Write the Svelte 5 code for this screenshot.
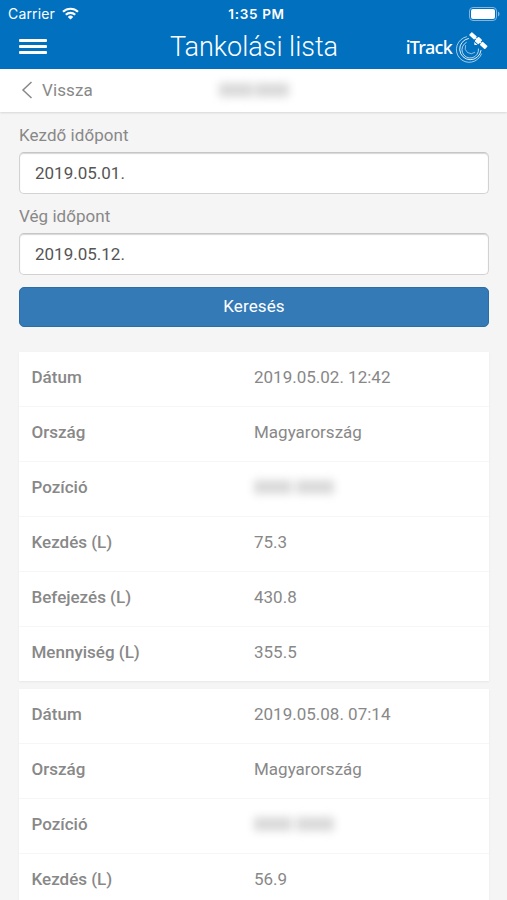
<script>
	let from = "2019.05.01.";
	let to = "2019.05.12.";

	const entries = [
		{
			date: "2019.05.02. 12:42",
			country: "Magyarország",
			start: "75.3",
			end: "430.8",
			amount: "355.5"
		},
		{
			date: "2019.05.08. 07:14",
			country: "Magyarország",
			start: "56.9"
		}
	];

	const rows = [
		["Dátum", "date"],
		["Ország", "country"],
		["Pozíció", "position"],
		["Kezdés (L)", "start"],
		["Befejezés (L)", "end"],
		["Mennyiség (L)", "amount"]
	];

	const visibleRows = (entry) => rows.filter(([, key]) => key === "position" || entry[key]);
</script>

<div class="screen">
	<header>
		<div class="status">
			<div class="carrier">
				<span>Carrier</span>
				<svg width="17" height="13" viewBox="0 0 17 13" fill="none" stroke="#fff" stroke-width="2.2">
					<path d="M1 4.8a10.8 10.8 0 0 1 15 0" />
					<path d="M3.8 7.8a6.7 6.7 0 0 1 9.4 0" />
					<path d="M8.5 12.4 5.8 9.9a3.9 3.9 0 0 1 5.4 0z" fill="#fff" stroke="none" />
				</svg>
			</div>
			<span class="clock">1:35 PM</span>
			<svg class="battery" width="32" height="14" viewBox="0 0 32 14">
				<rect x=".5" y=".5" width="27" height="13" rx="3.5" fill="none" stroke="#7fb7e0" />
				<rect x="2" y="2" width="24" height="10" rx="2" fill="#fff" />
				<path d="M29 4.5c2 .7 2 4.3 0 5z" fill="#7fb7e0" />
			</svg>
		</div>
		<div class="bar">
			<button class="menu" aria-label="Menü"><i></i><i></i><i></i></button>
			<h1>Tankolási lista</h1>
			<div class="logo">
				<span>iTrack</span>
				<svg width="34" height="34" viewBox="0 0 34 34" fill="none" stroke="#fff" stroke-linecap="round">
					<path d="M11.5 6.7A13 13 0 1 0 26.5 24" stroke-width=".8" opacity=".8" />
					<path d="M13.5 8.5A10.7 10.7 0 1 0 26 20.5" stroke-width="1" opacity=".9" />
					<path d="M11.3 12.4A8.3 8.3 0 1 0 23.5 19" stroke-width=".9" opacity=".8" />
					<path d="M10.5 15.5A6 6 0 0 0 19.8 22.4" stroke-width=".8" opacity=".7" />
					<g fill="#fff" stroke="none" transform="rotate(42 23.5 10.5)">
						<rect x="12.8" y="8.6" width="7" height="4.2" rx=".7" />
						<rect x="20.9" y="7.6" width="5.2" height="6" rx="1" />
						<rect x="27.2" y="8.6" width="7" height="4.2" rx=".7" />
						<path d="M19 10.2h9v1h-9zM21.2 14.5h4.6l-2.3 2z" />
					</g>
				</svg>
			</div>
		</div>
	</header>

	<nav>
		<button class="back">
			<svg width="12" height="18" viewBox="0 0 12 18" fill="none" stroke="#888" stroke-width="1.5">
				<path d="M10.5 1 2 9l8.5 8" />
			</svg>
			<span>Vissza</span>
		</button>
		<div class="hidden-text plate"><b></b><b></b></div>
	</nav>

	<main>
		<form>
			<label for="from">Kezdő időpont</label>
			<input id="from" type="text" bind:value={from} />
			<label for="to">Vég időpont</label>
			<input id="to" type="text" bind:value={to} />
			<button type="button" class="search">Keresés</button>
		</form>

		{#each entries as entry}
			<section class="card">
				{#each visibleRows(entry) as [label, key]}
					<div class="row">
						<span class="label">{label}</span>
						{#if key === "position"}
							<div class="hidden-text"><b></b><b></b></div>
						{:else}
							<span>{entry[key]}</span>
						{/if}
					</div>
				{/each}
			</section>
		{/each}
	</main>
</div>

<style>
	:global(body) {
		margin: 0;
		background: #f5f5f5;
	}

	.screen {
		height: 900px;
		overflow: hidden;
		background: #f5f5f5;
		color: #888;
		font-family: Roboto, sans-serif;
		font-size: 17px;
	}

	button {
		padding: 0;
		border: 0;
		background: none;
		color: inherit;
		font: inherit;
	}

	header {
		height: 69px;
		background: #0070bf;
		color: #fff;
	}

	.status {
		display: grid;
		grid-template-columns: 1fr auto 1fr;
		align-items: center;
		height: 27px;
		padding: 0 6px 0 8px;
		font-family: Inter, sans-serif;
		font-size: 14px;
	}

	.carrier {
		display: flex;
		align-items: center;
		gap: 7px;
		letter-spacing: .15px;
	}

	.clock {
		padding-left: 4px;
		font-size: 13.5px;
		font-weight: 600;
		letter-spacing: .7px;
	}

	.battery {
		justify-self: end;
	}

	.bar {
		display: grid;
		grid-template-columns: 1fr auto 1fr;
		align-items: center;
		height: 39px;
		padding: 0 18px 0 19px;
	}

	.menu {
		display: flex;
		flex-direction: column;
		gap: 3px;
		width: 28px;
	}

	.menu i {
		height: 3px;
		border-radius: 1px;
		background: #fff;
	}

	h1 {
		margin: 0;
		font-size: 27px;
		font-weight: 300;
		line-height: 38px;
	}

	.logo {
		display: flex;
		justify-content: flex-end;
		align-items: center;
		gap: 3px;
		font-family: "Noto Sans", sans-serif;
		font-size: 18px;
		font-weight: 500;
		letter-spacing: -.7px;
	}

	nav {
		display: grid;
		grid-template-columns: 1fr auto 1fr;
		align-items: center;
		height: 43px;
		padding: 0 20px 2px 21px;
		box-sizing: border-box;
		background: #fff;
		box-shadow: 0 1px 2px rgba(0, 0, 0, .12);
	}

	.back {
		display: flex;
		align-items: center;
		gap: 9px;
		letter-spacing: .1px;
	}

	.hidden-text {
		display: flex;
		gap: 4px;
		filter: blur(4.5px);
	}

	.hidden-text b {
		width: 38px;
		height: 14px;
		background: #dadada;
	}

	.plate {
		gap: 2px;
	}

	.plate b {
		width: 34px;
	}

	main {
		padding: 13px 18px 0 19px;
	}

	form {
		display: flex;
		flex-direction: column;
		margin-bottom: 25px;
	}

	label {
		height: 20px;
		margin-bottom: 7px;
		line-height: 20px;
		letter-spacing: .05px;
	}

	input {
		height: 42px;
		margin: 0 0 12px;
		padding: 0 15px 1px;
		box-sizing: border-box;
		border: 1px solid #d2d2d2;
		border-top-color: #c6c6c6;
		border-radius: 5px;
		background: #fff;
		box-shadow: inset 0 1px 1px rgba(0, 0, 0, .16);
		color: #555;
		font: inherit;
	}

	.search {
		height: 40px;
		padding-bottom: 2px;
		box-sizing: border-box;
		border: 1px solid #2e6da4;
		border-radius: 5px;
		background: #337ab7;
		color: #fff;
		letter-spacing: .1px;
	}

	.card {
		margin-bottom: 8px;
		background: #fff;
		box-shadow: 0 1px 2px rgba(0, 0, 0, .06);
	}

	.row {
		display: grid;
		grid-template-columns: 222px 1fr;
		align-items: center;
		height: 55px;
		padding: 0 13px 4px;
		box-sizing: border-box;
		border-bottom: 1px solid #f6f6f6;
	}

	.row:last-child {
		height: 54px;
		border-bottom: 0;
	}

	.label {
		margin-left: -.5px;
		font-weight: 500;
	}
</style>
